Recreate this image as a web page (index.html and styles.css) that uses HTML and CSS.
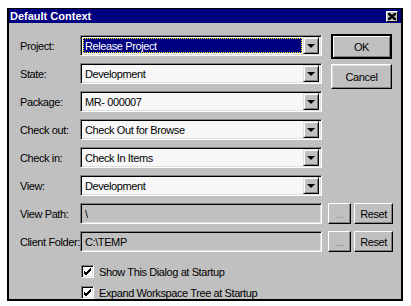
FILE: index.html
```html
<!DOCTYPE html>
<html lang="en">
  <head>
    <meta charset="UTF-8" />
    <title>Default Context</title>
    <link rel="stylesheet" href="styles.css">
  </head>
  <body>
    <div class="dialog">
      <div class="titlebar">
        <span class="title">Default Context</span>
        <span class="close">
          <svg width="8" height="7" viewBox="0 0 8 7">
            <path d="M0 0 L8 7 M1 0 L8 6 M0 1 L7 7 M8 0 L0 7 M7 0 L0 6 M8 1 L1 7" stroke="#000" stroke-width="1.1" fill="none"/>
          </svg>
        </span>
      </div>
      <div class="content">
        <div class="top">
          <div class="fields">
            <div class="row">
              <label>Project:</label>
              <div class="combo focused"><span class="value">Release Project</span><span class="arrow"></span></div>
            </div>
            <div class="row">
              <label>State:</label>
              <div class="combo"><span class="value">Development</span><span class="arrow"></span></div>
            </div>
            <div class="row">
              <label>Package:</label>
              <div class="combo"><span class="value">MR- 000007</span><span class="arrow"></span></div>
            </div>
            <div class="row">
              <label>Check out:</label>
              <div class="combo"><span class="value">Check Out for Browse</span><span class="arrow"></span></div>
            </div>
            <div class="row">
              <label>Check in:</label>
              <div class="combo"><span class="value">Check In Items</span><span class="arrow"></span></div>
            </div>
            <div class="row">
              <label>View:</label>
              <div class="combo"><span class="value">Development</span><span class="arrow"></span></div>
            </div>
          </div>
          <div class="actions">
            <div class="btn default">OK</div>
            <div class="btn">Cancel</div>
          </div>
        </div>
        <div class="row">
          <label>View Path:</label>
          <div class="field">\</div>
          <div class="small-btn dots">...</div>
          <div class="small-btn reset">Reset</div>
        </div>
        <div class="row">
          <label>Client Folder:</label>
          <div class="field">C:\TEMP</div>
          <div class="small-btn dots">...</div>
          <div class="small-btn reset">Reset</div>
        </div>
        <div class="checks">
          <div class="check">
            <span class="box"><svg width="9" height="9" viewBox="0 0 9 9"><path d="M1 4 L3 6 L8 1 M1 5 L3 7 L8 2 M1 6 L3 8 L8 3" stroke="#000" stroke-width="1" fill="none"/></svg></span>
            Show This Dialog at Startup
          </div>
          <div class="check">
            <span class="box"><svg width="9" height="9" viewBox="0 0 9 9"><path d="M1 4 L3 6 L8 1 M1 5 L3 7 L8 2 M1 6 L3 8 L8 3" stroke="#000" stroke-width="1" fill="none"/></svg></span>
            Expand Workspace Tree at Startup
          </div>
        </div>
      </div>
    </div>
  </body>
</html>
```

FILE: styles.css
```css
* {
  box-sizing: border-box;
}
body {
  margin: 0;
  background: #ffffff;
  font-family: "Liberation Sans", Arial, sans-serif;
  font-size: 11px;
  letter-spacing: -0.4px;
  color: #000000;
}
.dialog {
  margin: 8px 0 0 7px;
  width: 396px;
  height: 293px;
  background: #c0c0c0;
  border: 2px solid #000000;
  border-top-width: 1px;
  overflow: hidden;
}
.titlebar {
  height: 14px;
  background: #000080;
  display: flex;
  align-items: center;
  justify-content: space-between;
  padding: 0 3px 0 1px;
}
.title {
  color: #ffffff;
  font-weight: bold;
  font-size: 11px;
  letter-spacing: 0;
}
.close {
  width: 12px;
  height: 11px;
  background: #c0c0c0;
  border: 1px solid;
  border-color: #ffffff #000000 #000000 #ffffff;
  display: flex;
  align-items: center;
  justify-content: center;
}
.content {
  padding: 12px 0 0 11px;
}
.top {
  display: flex;
}
.fields {
  display: flex;
  flex-direction: column;
  gap: 7px;
}
.row {
  display: flex;
  align-items: center;
  height: 21px;
}
.content > .row {
  margin-top: 7px;
}
label {
  width: 60px;
  flex-shrink: 0;
  white-space: nowrap;
}
.combo,
.field {
  width: 242px;
  height: 21px;
  border: 1px solid;
  border-color: #808080 #ffffff #ffffff #808080;
  box-shadow: inset 1px 1px #000000, inset -1px -1px #dfdfdf;
  background: #f7f7f7;
  display: flex;
  align-items: center;
  padding: 2px;
}
.field {
  background: #c0c0c0;
  padding-left: 4px;
}
.value {
  flex: 1;
  height: 100%;
  display: flex;
  align-items: center;
  padding-left: 2px;
}
.combo.focused .value {
  background: #000080;
  color: #ffffff;
  outline: 1px dotted #ffff00;
  outline-offset: -1px;
  margin-right: 1px;
}
.arrow {
  width: 16px;
  height: 17px;
  background: #c0c0c0;
  border: 1px solid;
  border-color: #dfdfdf #000000 #000000 #dfdfdf;
  box-shadow: inset 1px 1px #ffffff, inset -1px -1px #808080;
  display: flex;
  align-items: center;
  justify-content: center;
}
.arrow::after {
  content: "";
  border-left: 4px solid transparent;
  border-right: 4px solid transparent;
  border-top: 4px solid #000000;
  margin-top: 1px;
}
.actions {
  margin: -1px 0 0 9px;
  display: flex;
  flex-direction: column;
  gap: 5px;
}
.btn {
  width: 61px;
  height: 25px;
  background: #c0c0c0;
  border: 1px solid;
  border-color: #ffffff #000000 #000000 #ffffff;
  box-shadow: inset -1px -1px #808080, inset 1px 1px #dfdfdf;
  display: flex;
  align-items: center;
  justify-content: center;
}
.btn.default {
  border-width: 2px;
  border-color: #000000;
  box-shadow: inset 1px 1px #ffffff, inset -1px -1px #808080;
}
.small-btn {
  height: 21px;
  background: #c0c0c0;
  border: 1px solid;
  border-color: #ffffff #000000 #000000 #ffffff;
  box-shadow: inset -1px -1px #808080;
  display: flex;
  align-items: center;
  justify-content: center;
}
.dots {
  width: 23px;
  margin-left: 6px;
  color: #808080;
}
.reset {
  width: 39px;
  margin-left: 3px;
}
.checks {
  margin: 13px 0 0 61px;
  display: flex;
  flex-direction: column;
  gap: 8px;
}
.check {
  display: flex;
  align-items: center;
  height: 13px;
  white-space: nowrap;
}
.box {
  width: 13px;
  height: 13px;
  margin-right: 5px;
  background: #ffffff;
  border: 1px solid;
  border-color: #808080 #ffffff #ffffff #808080;
  box-shadow: inset 1px 1px #000000, inset -1px -1px #dfdfdf;
  display: flex;
  align-items: center;
  justify-content: center;
}
```
